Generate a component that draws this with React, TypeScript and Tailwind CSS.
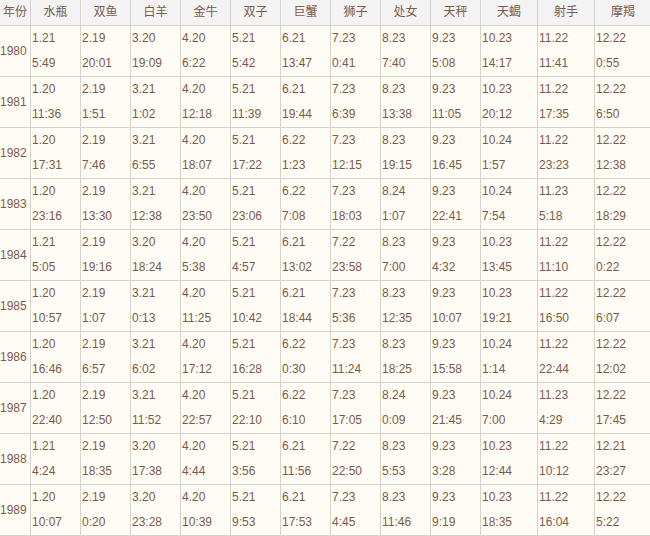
const headers = ['年份', '水瓶', '双鱼', '白羊', '金牛', '双子', '巨蟹', '狮子', '处女', '天秤', '天蝎', '射手', '摩羯'];

// each row: year, then "date time" pairs for the 12 signs
const rows: [string, string[]][] = [
  ['1980', ['1.21 5:49', '2.19 20:01', '3.20 19:09', '4.20 6:22', '5.21 5:42', '6.21 13:47', '7.23 0:41', '8.23 7:40', '9.23 5:08', '10.23 14:17', '11.22 11:41', '12.22 0:55']],
  ['1981', ['1.20 11:36', '2.19 1:51', '3.21 1:02', '4.20 12:18', '5.21 11:39', '6.21 19:44', '7.23 6:39', '8.23 13:38', '9.23 11:05', '10.23 20:12', '11.22 17:35', '12.22 6:50']],
  ['1982', ['1.20 17:31', '2.19 7:46', '3.21 6:55', '4.20 18:07', '5.21 17:22', '6.22 1:23', '7.23 12:15', '8.23 19:15', '9.23 16:45', '10.24 1:57', '11.22 23:23', '12.22 12:38']],
  ['1983', ['1.20 23:16', '2.19 13:30', '3.21 12:38', '4.20 23:50', '5.21 23:06', '6.22 7:08', '7.23 18:03', '8.24 1:07', '9.23 22:41', '10.24 7:54', '11.23 5:18', '12.22 18:29']],
  ['1984', ['1.21 5:05', '2.19 19:16', '3.20 18:24', '4.20 5:38', '5.21 4:57', '6.21 13:02', '7.22 23:58', '8.23 7:00', '9.23 4:32', '10.23 13:45', '11.22 11:10', '12.22 0:22']],
  ['1985', ['1.20 10:57', '2.19 1:07', '3.21 0:13', '4.20 11:25', '5.21 10:42', '6.21 18:44', '7.23 5:36', '8.23 12:35', '9.23 10:07', '10.23 19:21', '11.22 16:50', '12.22 6:07']],
  ['1986', ['1.20 16:46', '2.19 6:57', '3.21 6:02', '4.20 17:12', '5.21 16:28', '6.22 0:30', '7.23 11:24', '8.23 18:25', '9.23 15:58', '10.24 1:14', '11.22 22:44', '12.22 12:02']],
  ['1987', ['1.20 22:40', '2.19 12:50', '3.21 11:52', '4.20 22:57', '5.21 22:10', '6.22 6:10', '7.23 17:05', '8.24 0:09', '9.23 21:45', '10.24 7:00', '11.23 4:29', '12.22 17:45']],
  ['1988', ['1.21 4:24', '2.19 18:35', '3.20 17:38', '4.20 4:44', '5.21 3:56', '6.21 11:56', '7.22 22:50', '8.23 5:53', '9.23 3:28', '10.23 12:44', '11.22 10:12', '12.21 23:27']],
  ['1989', ['1.20 10:07', '2.19 0:20', '3.20 23:28', '4.20 10:39', '5.21 9:53', '6.21 17:53', '7.23 4:45', '8.23 11:46', '9.23 9:19', '10.23 18:35', '11.22 16:04', '12.22 5:22']],
];

const grid = 'grid grid-cols-[31px_repeat(9,50px)_repeat(3,57px)]';

export default function App() {
  return (
    <div
      className="w-[650px] h-[536px] overflow-hidden bg-white text-[12px] text-[#7a5b49]"
      style={{ fontFamily: '"Liberation Sans", "Noto Sans CJK SC", sans-serif' }}
    >
      <div className="w-[651px]">
        <div className={`${grid} bg-[#f3f3f3]`}>
          {headers.map((h) => (
            <div key={h} className="h-[26px] leading-[25px] text-center border-r border-b border-[#d6d3cf]">
              {h}
            </div>
          ))}
        </div>
        {rows.map(([year, cells]) => (
          <div key={year} className={`${grid} bg-[#fffcf5]`}>
            <div className="h-[51px] flex items-center border-r border-b border-[#d6d3cf]">{year}</div>
            {cells.map((c, i) => {
              const [d, t] = c.split(' ');
              return (
                <div key={i} className="h-[51px] pl-px leading-[25px] border-r border-b border-[#d6d3cf]">
                  <div>{d}</div>
                  <div>{t}</div>
                </div>
              );
            })}
          </div>
        ))}
      </div>
    </div>
  );
}
